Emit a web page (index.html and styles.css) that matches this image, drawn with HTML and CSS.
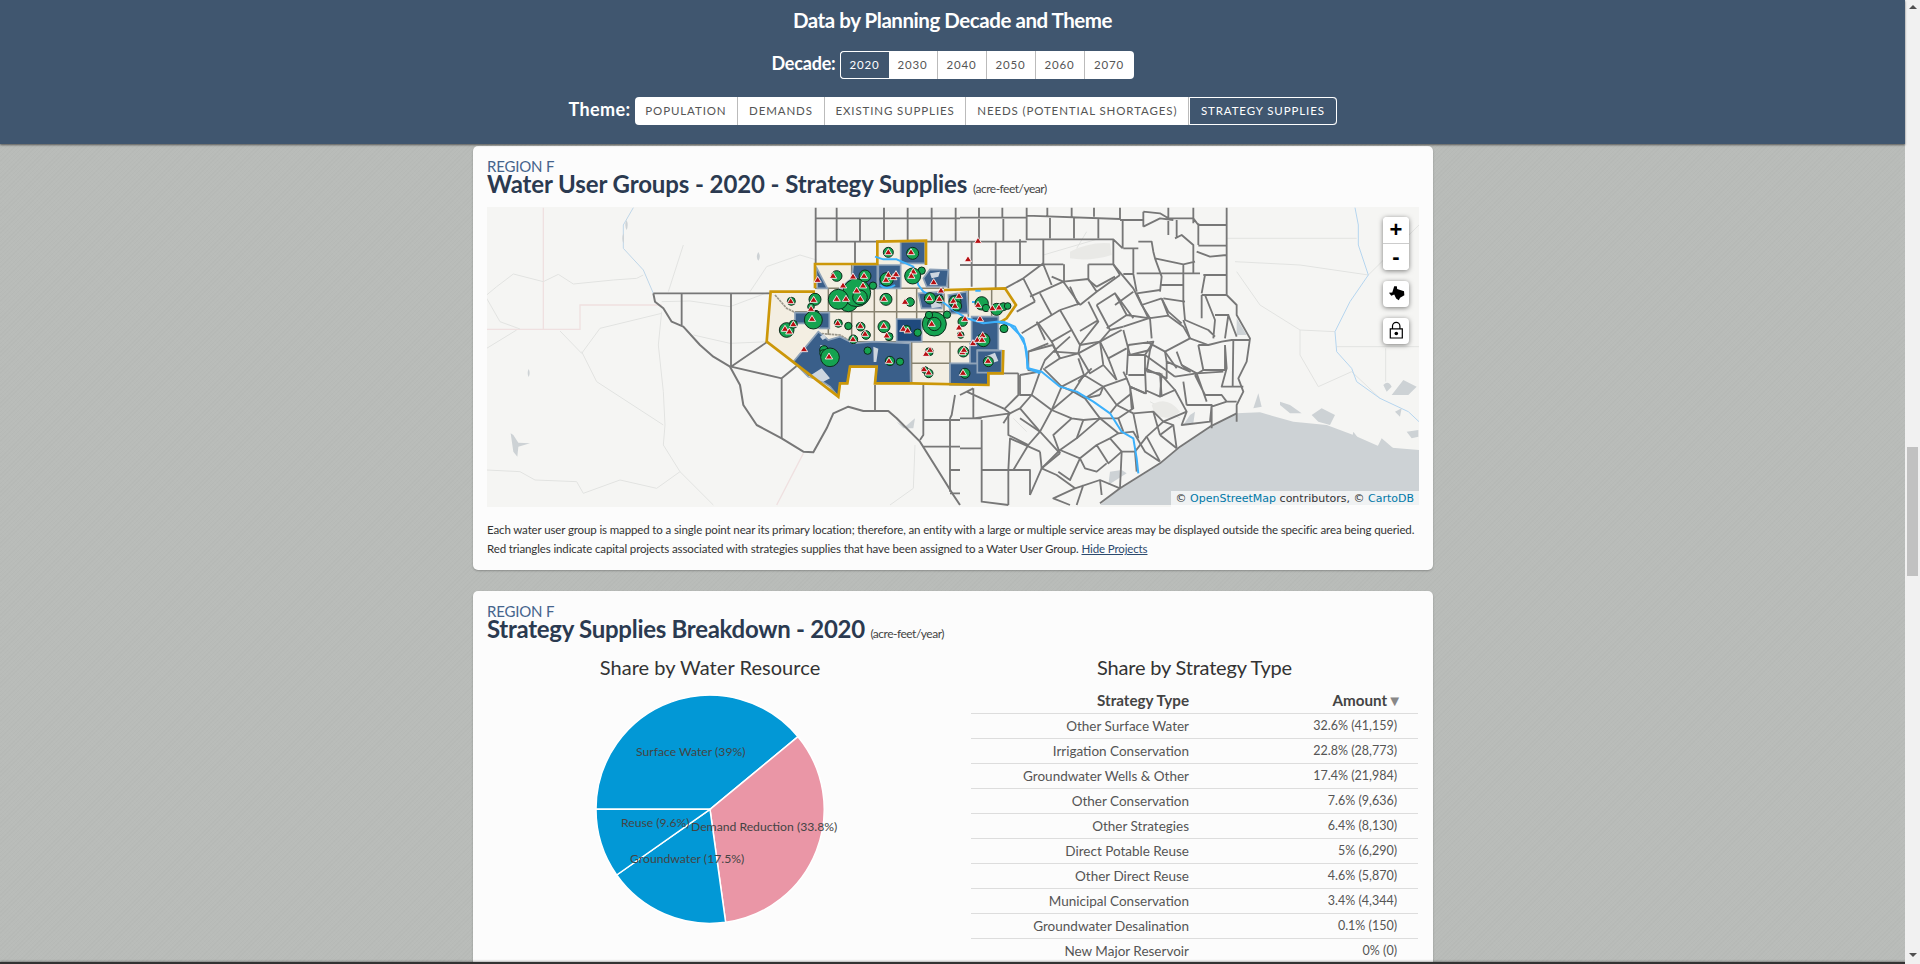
FILE: index.html
```html
<!DOCTYPE html>
<html lang="en">
<head>
<meta charset="utf-8">
<title>Data by Planning Decade and Theme</title>
<link rel="stylesheet" href="styles.css">
</head>
<body>
<div class="page">
  <header class="topbar">
    <h2 class="topbar-title">Data by Planning Decade and Theme</h2>
    <div class="picker">
      <span class="picker-label">Decade:</span>
      <div class="btn-group decade">
        <a class="btn active">2020</a><a class="btn">2030</a><a class="btn">2040</a><a class="btn">2050</a><a class="btn">2060</a><a class="btn">2070</a>
      </div>
    </div>
    <div class="picker theme">
      <span class="picker-label">Theme:</span>
      <div class="btn-group">
        <a class="btn">POPULATION</a><a class="btn">DEMANDS</a><a class="btn">EXISTING SUPPLIES</a><a class="btn">NEEDS (POTENTIAL SHORTAGES)</a><a class="btn active">STRATEGY SUPPLIES</a>
      </div>
    </div>
  </header>
  <main class="content">
    <section class="card map-card">
      <div class="eyebrow">REGION F</div>
      <h3 class="card-title">Water User Groups - 2020 - Strategy Supplies <small>(acre-feet/year)</small></h3>
      <div class="map">
        <svg class="map-svg" viewBox="487 207 932 300" width="932" height="300" aria-hidden="true">
          <defs>
            <g id="t"><polygon class="tri" points="0,-11 11,7 -11,7"/></g>
          </defs>
          <rect class="land" x="487" y="207" width="932" height="300"/>
          <g transform="translate(480 205) scale(.33333)">
            <path class="state" d="M20 373H300V300H545M190 8V373M970 745L890 900"/>
            <path class="road" d="M20 270L50 245L100 207L190 230L235 208L280 237L400 225L470 220L490 210M20 280L60 350L120 372M240 378L305 445L360 370L545 325M305 440L350 530L550 660M545 320L535 420L550 560L555 660L550 720L600 800L700 900M20 795L120 800L165 825L290 830L310 865L420 825L530 850L600 800M565 260L610 120M810 260L860 185L960 150L1010 165M545 290L630 288L750 305L870 260M640 390L750 415L870 410M20 430L110 375M1305 720L1300 850L1230 900"/>
            <path class="river-faint" d="M460 8L430 60L430 130L490 195L520 265"/>
            <path class="lake" d="M835 141q-9 15 0 26q9-12 0-26ZM146 492q-6 12 0 24q6-12 0-24ZM92 685L100 740L112 755L115 725L150 715L115 713L100 690ZM440 45q-8 15 0 30q6-15 0-30ZM430 85q-6 15 0 30q4-15 0-30ZM1250 650L1275 665L1305 640L1300 670L1270 670Z"/>
            <path class="county" d="M1007 8V175M1007 40H1440M1007 110H1440M1070 8V110M1140 40V110M1212 8V110M1283 8V110M1355 8V110M1427 8V110M1125 110V180M1405 110V250"/>
            <path class="county" d="M520 265H875M605 265V360M753 265V485M753 485L860 412M753 485L905 520L950 483M905 520V700"/>
            <path class="county thick" d="M520 265L525 290L550 310L575 350L610 365L660 420L700 455L750 485L780 540L790 600L830 660L905 700L970 740L1000 742L1040 670L1060 625L1105 605L1150 618L1225 618L1250 640L1320 710L1370 790L1420 870L1440 900"/>
            <path class="county" d="M1185 540V615M1330 540V690L1320 705M1330 645H1440M1330 725H1440M1410 640V860M1410 795H1440M1410 865H1440M1425 570L1415 630L1410 640"/>
          </g>
          <g transform="translate(960 205) scale(.33333)">
            <path class="water" d="M420 900L480 850L600 775L660 725L750 665L830 625L900 622L1000 650L1100 660L1180 690L1260 725L1377 735V900Z"/>
            <path class="road" d="M825 170L1020 180L1225 210M830 200L900 300L1020 375L1020 450L1075 545L1175 500M1130 425H1377M1020 375L1125 380M1225 210L1377 60M250 150L420 100M350 130L380 80M1175 500L1260 580M1277 430V530M160 640L200 680M570 590L660 640M800 100H1190"/>
            <path class="road fat" d="M330 140Q390 110 450 115L455 150Q390 170 330 160ZM575 600Q620 570 660 620Q630 650 585 630Z"/>
            <path class="river-faint thin" d="M1185 8L1195 60L1195 120L1225 210L1170 290L1125 380L1130 440L1175 490L1190 530L1260 580L1345 620L1377 650"/>
            <path class="lake" d="M895 565L905 605L880 610ZM960 590L990 600L1025 625L990 625L960 600ZM1055 630L1085 610L1125 630L1110 660L1075 650ZM1270 540Q1285 525 1295 545L1280 560ZM1295 570L1330 525L1370 545L1345 570ZM1305 620L1325 610L1320 635ZM1340 680L1375 675V695L1355 700ZM1180 680L1195 700L1175 705ZM1265 700L1300 730L1250 730ZM690 630L705 620L700 655L670 660ZM830 340L860 390L830 390ZM450 800L485 795L500 805L445 840Z"/>
            <path class="county" d="M0 38H200M57 8V38M127 8V38M200 8V105M262 8V32M335 8V35M402 8V35M480 8V45M200 32L480 42M270 32V100M342 35V100M415 40V100M488 45V130M0 110H200M130 42V110M57 42V110M200 103H460L488 130M35 110V245M107 110V250M180 103V182M250 103V178M0 180H250M250 178H310M312 178V235M385 178V222M460 178H385M460 103V178M460 178L480 210M490 130H535M520 130V205M480 45H550"/>
            <path class="county" d="M550 20L600 25L625 40L700 40L715 60H800M550 65L600 40L640 45M550 20V65M625 8V90M650 45V95M700 8V55M715 55V120M800 8V270M535 110H575L580 140L585 160L670 178L705 170M645 100L665 90L700 120V170M715 122H800M710 140L750 155L800 150M700 170V205M585 160L605 215L600 260M670 178V290M605 240H670M730 210H800M725 265L735 210M725 270H800L830 300V330L870 400L860 470L835 520L850 560L830 600L830 650M490 207H520L530 260M600 205H720"/>
            <path class="county" d="M135 250L190 220L225 290M190 220L250 175M250 178L275 240M275 215L310 230L360 300M310 230L385 222L410 260M460 178L520 250L545 300L570 340L575 400M480 210L410 260L360 300M520 260L465 300M600 255L530 265L545 300M300 315L235 355L275 410L335 375L300 315M235 355L185 385M360 295L300 315M335 375L360 420L415 350L385 290M415 345L360 378M410 300L450 375L490 365M450 375L420 410L445 460L500 430M490 375L510 450L570 435L580 410L505 420M565 340L625 332L670 365L690 400L615 440L560 410M690 400L745 420L785 410L815 405H870M670 290L675 345L745 375L765 395M605 280L625 320L665 355M735 270L765 345L760 400M765 330H805L795 400M805 330L830 395M715 420L730 495H795V420M795 420L800 490L785 545H850M820 405L818 545"/>
            <path class="county" d="M650 440L665 480L690 500L620 470V520L555 490L558 565L510 545L515 610M420 410L355 445L280 440L255 465L240 500L205 495V440L278 420M240 500L215 570L180 610L150 625L130 655M180 510V570L215 570M250 490L305 545L275 615L240 680M355 460L372 510L305 545M372 510L430 545L375 580L420 640M430 545L500 520L490 500M510 545L520 610L475 640L490 680M375 580L340 560L275 615L335 640L370 645L425 640M335 640L280 690L300 745M370 645L350 700L300 735L360 760L410 720L450 700M420 640L475 685L520 680L555 740L600 770M410 720L445 775L485 740H525L530 800M520 625L580 620L610 650L640 660L650 730M555 555L600 575L645 555L680 620L665 660L750 650L755 600H680M610 650L560 695L600 770M645 515L710 505L740 590M710 505L790 500M705 510L735 570H785L800 590L755 605V670M800 590L830 590"/>
            <path class="county" d="M300 745L245 790L290 810L345 850L420 825L480 850M360 760L330 825L295 800M360 760L375 790L410 800L440 775M485 740L480 850M420 825L425 870M345 850L280 880L330 900M370 840L350 900M65 645V890L145 900M0 640H65M65 730H0M65 795H210V870M145 795L150 700L240 740M145 625V690L205 720L240 680L180 640M40 550V640L150 625M0 570L40 550M20 560L130 610L150 625M85 540V505H175M175 505V570L135 610M420 895L480 850L600 775L660 725L750 665L830 625"/>
            <path class="county" d="M225 290L170 320M210 275L310 230M240 265L275 330M330 245L355 300M385 225L410 245L465 215M410 300L465 265L520 340M465 265L500 330L570 340M500 330L440 370M420 410L485 375M278 420L300 460L355 445M300 460L255 490M355 445L390 505L430 480L470 525M430 480L420 410M505 420L500 510M505 510H555V450L505 450M555 450L625 500L645 515M580 410L555 450M615 440L650 490M430 545L470 600L515 565M470 600L450 625M375 580L420 570M520 625L535 700M580 620L600 690M610 650L680 620M530 205H600M610 280L675 290M530 265L565 340M605 280L545 300M725 270V340M670 345L690 400M240 680L300 745M205 720L160 795M240 740L245 790M210 870L245 790M0 510H85M145 795V900M230 350L255 405M265 415L205 440M330 395L280 440M395 490L355 530M670 530L680 600M600 505L605 575M560 500L600 505"/>
            <path class="county" d="M215 570L275 615M180 610L240 680M305 545L340 560M240 500L180 510M372 510L340 560M420 570L430 545M500 520L510 545M470 600L520 625M475 640L420 640M275 410L300 460M360 420L420 410M360 420L355 445M490 365L565 340M445 460L470 525M570 435L560 500M615 440L620 470M745 420L715 420M730 495L705 510M665 480L710 505M555 565L510 545M600 575L605 505M680 600H755M645 555L600 505M300 735L245 790M350 700L420 640M450 700L475 685M450 700L485 740M560 695L525 740M600 690L650 730M640 660L600 690M625 332L605 280"/>
          </g>
          <g transform="translate(740 220) scale(.33333)">
            <path class="cream" d="M92 215H225V132H412V65L558 62V135L612 210L795 205L828 255L800 295L775 310V390H790L788 460H745V495L515 490H405L410 440H330L322 490H300L295 530L80 365Z"/>
            <path class="cell" d="M265 205V345M335 275V365M403 205V365M470 205V297M530 205V300M612 210V290M685 210V290M755 210V290M225 205H612M165 275H612M265 365H470M515 365H775M515 430H630M515 365V490M630 365V490M335 132V205"/>
            <path class="pecos" d="M105 225L140 265L170 280M235 340L300 345L350 375L400 380L410 430L415 440"/>
            <path class="blue" d="M228 140L262 205H232Z"/>
            <path class="blue" d="M340 135H412V205H300L335 175Z"/>
            <path class="blue" d="M415 135H482V205H415Z"/>
            <path class="blue" d="M482 65H555V130H482Z"/>
            <path class="blue" d="M165 278H268V325H240L200 310H165Z"/>
            <path class="blue dark" d="M470 297H545V365H470Z"/>
            <path class="blue" d="M160 425L235 335L265 360L300 350L340 370L400 365L510 370L512 490H405L410 440H330L322 490H300L295 530L270 500L240 480L205 470Z"/>
            <path class="blue" d="M630 430H745V495H630Z"/>
            <path class="blue" d="M695 290H775V390H712V430H690V370H695Z"/>
            <path class="blue" d="M712 392H785V458H712Z"/>
            <path class="blue" d="M550 175L570 148L625 150L620 200H560ZM535 220L610 215L605 265H545Z"/>
            <path class="blue" d="M625 225L680 215L685 280H630Z"/>
            <path class="patch" d="M240 350l12-8l6 12l-10 6ZM240 375l14 2l-8 10ZM205 470l40-25l25 30l-20 10ZM735 410l30-12l10 25l-25 8ZM570 240l25-10l10 30l-30 5ZM570 160l30-5l-5 15l-20 5ZM400 380l15 6l-6 40l-8 0Z"/>
            <path class="gold" d="M225 205V132H412V65L558 62V135M612 210L795 205L828 255L800 295L775 310M790 390L788 460H745V495L515 490H405L410 440H330L322 490H300L295 530L80 365L92 215H225"/>
            <path class="river" d="M405 110L430 118L470 118L520 140L535 195L550 215L600 240L640 270L680 295L730 310L770 305L810 315L850 355L860 395L862 445L900 460M420 195Q440 212 465 195"/>
            <path class="river" d="M696 246L705 246M706 212H722"/>
            <g class="dots">
              <circle cx="325" cy="245" r="30"/><circle cx="350" cy="218" r="42"/><circle cx="295" cy="238" r="30"/><circle cx="360" cy="232" r="22"/><circle cx="445" cy="97" r="15"/><circle cx="518" cy="100" r="18"/><circle cx="545" cy="152" r="11"/><circle cx="290" cy="168" r="16"/><circle cx="375" cy="168" r="18"/><circle cx="399" cy="197" r="11"/><circle cx="225" cy="238" r="18"/><circle cx="438" cy="238" r="18"/><circle cx="510" cy="246" r="13"/><circle cx="518" cy="168" r="24"/><circle cx="154" cy="244" r="12"/><circle cx="213" cy="260" r="10"/><circle cx="228" cy="280" r="9"/><circle cx="220" cy="300" r="27"/><circle cx="325" cy="318" r="11"/><circle cx="295" cy="310" r="12"/><circle cx="362" cy="320" r="13"/><circle cx="378" cy="345" r="13"/><circle cx="432" cy="320" r="18"/><circle cx="447" cy="350" r="12"/><circle cx="340" cy="358" r="13"/><circle cx="140" cy="330" r="22"/><circle cx="160" cy="313" r="12"/><circle cx="500" cy="328" r="12"/><circle cx="533" cy="338" r="11"/><circle cx="583" cy="312" r="36"/><circle cx="567" cy="285" r="11"/><circle cx="621" cy="284" r="11"/><circle cx="570" cy="235" r="17"/><circle cx="598" cy="237" r="12"/><circle cx="645" cy="245" r="18"/><circle cx="650" cy="258" r="15"/><circle cx="725" cy="250" r="20"/><circle cx="738" cy="264" r="11"/><circle cx="770" cy="268" r="18"/><circle cx="790" cy="260" r="12"/><circle cx="803" cy="258" r="10"/><circle cx="792" cy="326" r="12"/><circle cx="668" cy="305" r="14"/><circle cx="662" cy="345" r="10"/><circle cx="730" cy="360" r="20"/><circle cx="383" cy="392" r="11"/><circle cx="252" cy="390" r="13"/><circle cx="250" cy="400" r="11"/><circle cx="270" cy="412" r="28"/><circle cx="450" cy="423" r="14"/><circle cx="480" cy="425" r="11"/><circle cx="568" cy="395" r="12"/><circle cx="566" cy="460" r="13"/><circle cx="555" cy="450" r="10"/><circle cx="675" cy="460" r="15"/><circle cx="670" cy="395" r="16"/><circle cx="745" cy="425" r="15"/><circle cx="440" cy="178" r="20"/><circle cx="583" cy="312" r="20"/>
            </g>
            <g>
              <use href="#t" x="445" y="97"/><use href="#t" x="513" y="97"/><use href="#t" x="714" y="63"/><use href="#t" x="684" y="118"/><use href="#t" x="233" y="180"/><use href="#t" x="279" y="168"/><use href="#t" x="339" y="170"/><use href="#t" x="372" y="168"/><use href="#t" x="309" y="197"/><use href="#t" x="369" y="197"/><use href="#t" x="350" y="212"/><use href="#t" x="445" y="165"/><use href="#t" x="460" y="172"/><use href="#t" x="468" y="163"/><use href="#t" x="438" y="180"/><use href="#t" x="520" y="155"/><use href="#t" x="514" y="168"/><use href="#t" x="581" y="187"/><use href="#t" x="603" y="212"/><use href="#t" x="568" y="235"/><use href="#t" x="598" y="237"/><use href="#t" x="152" y="244"/><use href="#t" x="221" y="240"/><use href="#t" x="213" y="267"/><use href="#t" x="216" y="297"/><use href="#t" x="290" y="237"/><use href="#t" x="318" y="237"/><use href="#t" x="361" y="237"/><use href="#t" x="432" y="237"/><use href="#t" x="495" y="246"/><use href="#t" x="640" y="243"/><use href="#t" x="657" y="228"/><use href="#t" x="645" y="258"/><use href="#t" x="714" y="255"/><use href="#t" x="757" y="265"/><use href="#t" x="777" y="263"/><use href="#t" x="293" y="310"/><use href="#t" x="160" y="313"/><use href="#t" x="135" y="327"/><use href="#t" x="148" y="335"/><use href="#t" x="361" y="318"/><use href="#t" x="375" y="342"/><use href="#t" x="431" y="318"/><use href="#t" x="440" y="347"/><use href="#t" x="339" y="358"/><use href="#t" x="490" y="327"/><use href="#t" x="503" y="332"/><use href="#t" x="575" y="312"/><use href="#t" x="657" y="323"/><use href="#t" x="660" y="343"/><use href="#t" x="675" y="297"/><use href="#t" x="720" y="297"/><use href="#t" x="699" y="370"/><use href="#t" x="712" y="360"/><use href="#t" x="728" y="346"/><use href="#t" x="726" y="360"/><use href="#t" x="192" y="388"/><use href="#t" x="267" y="410"/><use href="#t" x="447" y="423"/><use href="#t" x="558" y="402"/><use href="#t" x="570" y="390"/><use href="#t" x="667" y="397"/><use href="#t" x="672" y="390"/><use href="#t" x="552" y="448"/><use href="#t" x="566" y="458"/><use href="#t" x="669" y="459"/><use href="#t" x="744" y="423"/>
            </g>
          </g>
          <g transform="translate(960 205) scale(.33333)">
            <path class="river" d="M110 350L130 350L165 365L195 420L205 490L245 500L300 545L350 560L400 590L450 625L485 680L520 700L530 760L535 805"/>
          </g>
        </svg>
        <div class="map-controls">
          <div class="ctl-stack">
            <a class="ctl">+</a>
            <a class="ctl">-</a>
          </div>
          <a class="ctl single">
            <svg class="ctl-icon" viewBox="1283 240 52 50" width="17" height="17" aria-hidden="true"><path class="ink" d="M1286 263L1296 262L1302 243L1310 243L1311 251L1332 258L1333 270L1320 278L1316 286L1308 280L1302 268L1293 272Z"/></svg>
          </a>
          <a class="ctl single">
            <svg class="ctl-icon" viewBox="0 0 26 26" width="26" height="26" aria-hidden="true"><path class="lock-line" d="M9.5 10.5V8a3.7 3.7 0 0 1 7.4 0v2.500M7.300 10.800H19.300V20H7.300Z"/><circle class="ink" cx="13.300" cy="15.500" r="1.800"/></svg>
          </a>
        </div>
        <div class="attribution">© <a>OpenStreetMap</a> contributors, © <a>CartoDB</a></div>
      </div>
      <p class="note">Each water user group is mapped to a single point near its primary location; therefore, an entity with a large or multiple service areas may be displayed outside the specific area being queried. Red triangles indicate capital projects associated with strategies supplies that have been assigned to a Water User Group. <a class="note-link">Hide Projects</a></p>
    </section>
    <section class="card breakdown">
      <div class="eyebrow">REGION F</div>
      <h3 class="card-title">Strategy Supplies Breakdown - 2020 <small>(acre-feet/year)</small></h3>
      <div class="columns">
        <div class="col-chart">
          <h4 class="col-title chart-title">Share by Water Resource</h4>
          <svg class="pie" viewBox="0 0 446 300" width="446" height="300" aria-hidden="false">
            <g transform="translate(93 0) scale(.33333)">
              <path class="slice-blue" d="M390 388L48 388A342 342 0 0 1 654 170Z"/>
              <path class="slice-pink" d="M390 388L654 170A342 342 0 0 1 437 727Z"/>
              <path class="slice-blue" d="M390 388L437 727A342 342 0 0 1 110 585Z"/>
              <path class="slice-blue" d="M390 388L110 585A342 342 0 0 1 48 388Z"/>
            </g>
            <text class="pie-label" x="149" y="76">Surface Water (39%)</text>
            <text class="pie-label" x="134" y="147">Reuse (9.6%)</text>
            <text class="pie-label" x="204" y="151">Demand Reduction (33.8%)</text>
            <text class="pie-label" x="143" y="183">Groundwater (17.5%)</text>
          </svg>
        </div>
        <div class="col-table">
          <h4 class="col-title">Share by Strategy Type</h4>
          <table class="data">
            <thead><tr><th>Strategy Type</th><th>Amount<span class="sort">▼</span></th></tr></thead>
            <tbody>
              <tr><td>Other Surface Water</td><td>32.6% (41,159)</td></tr>
              <tr><td>Irrigation Conservation</td><td>22.8% (28,773)</td></tr>
              <tr><td>Groundwater Wells &amp; Other</td><td>17.4% (21,984)</td></tr>
              <tr><td>Other Conservation</td><td>7.6% (9,636)</td></tr>
              <tr><td>Other Strategies</td><td>6.4% (8,130)</td></tr>
              <tr><td>Direct Potable Reuse</td><td>5% (6,290)</td></tr>
              <tr><td>Other Direct Reuse</td><td>4.6% (5,870)</td></tr>
              <tr><td>Municipal Conservation</td><td>3.4% (4,344)</td></tr>
              <tr><td>Groundwater Desalination</td><td>0.1% (150)</td></tr>
              <tr><td>New Major Reservoir</td><td>0% (0)</td></tr>
            </tbody>
          </table>
        </div>
      </div>
    </section>
  </main>
  <div class="bottom-edge"></div>
</div>
<aside class="scrollbar">
  <span class="arrow up"></span>
  <span class="thumb"></span>
  <span class="arrow down"></span>
</aside>
</body>
</html>
```
FILE: styles.css
```css
* { box-sizing: border-box; }
html, body { margin: 0; height: 964px; overflow: hidden; }
body { display: flex; font-family: Lato, "Liberation Sans", sans-serif; color: #444; }

.page {
  flex: 1;
  min-width: 0;
  height: 964px;
  display: flex;
  flex-direction: column;
  background-color: #b9bcb9;
  background-image:
    repeating-linear-gradient(45deg, rgba(255,255,255,.02) 0 1px, transparent 1px 3px),
    repeating-linear-gradient(-45deg, rgba(0,0,0,.015) 0 1px, transparent 1px 3px);
}

.topbar {
  height: 144px;
  flex: none;
  background: #40566f;
  color: #fff;
  text-align: center;
  box-shadow: 0 1px 2px rgba(0,0,0,.55);
  position: relative;
  z-index: 2;
}
.topbar-title {
  margin: 0 0 11px;
  height: 40px;
  font-size: 20.500px;
  line-height: 40px;
  font-weight: 700;
  letter-spacing: -.45px;
}
.picker { display: flex; justify-content: center; align-items: flex-start; gap: 4px; height: 28px; }
.picker.theme { margin-top: 18px; }
.picker-label { font-size: 18px; font-weight: 700; line-height: 24px; letter-spacing: -.2px; }
.theme .picker-label { letter-spacing: .4px; }
.btn-group { display: flex; background: #fff; border-radius: 4px; height: 28px; overflow: hidden; }
.btn {
  display: block;
  height: 28px;
  padding: 0 10.800px;
  line-height: 28px;
  font-size: 11.500px;
  letter-spacing: .88px;
  color: #555;
  border-right: 1px solid #bbb;
}
.btn:last-child { border-right: 0; }
.decade .btn { width: 49px; padding: 0; text-align: center; }
.btn.active {
  background: #40566f;
  color: #fff;
  border: 1px solid #fff;
  line-height: 26px;
}
.btn-group .btn.active:first-child { border-radius: 4px 0 0 4px; border-right: 0; }
.btn-group .btn.active:last-child { border-radius: 0 4px 4px 0; }

.content {
  flex: 1;
  min-height: 0;
  overflow: hidden;
  padding-top: 2px;
}
.bottom-edge {
  flex: none;
  height: 2px;
  background: #333;
  box-shadow: 0 -1px 2px rgba(0,0,0,.3);
}

.card {
  width: 960px;
  margin: 0 auto 21px 473px;
  padding: 11px 14px 0;
  background: #fcfcfc;
  border-radius: 5px;
  box-shadow: 0 1px 2px rgba(0,0,0,.25);
}
.map-card { height: 424px; }
.eyebrow { font-size: 15px; line-height: 18px; color: #45648c; letter-spacing: -.2px; }
.card-title {
  margin: 0;
  font-size: 24px;
  line-height: 18px;
  font-weight: 700;
  color: #2b3a50;
  letter-spacing: -.1px;
  white-space: nowrap;
}
.breakdown .card-title { letter-spacing: -.28px; }
.card-title small { font-size: 12px; line-height: 0; font-weight: 400; letter-spacing: -.5px; color: #444; }

.map {
  position: relative;
  width: 932px;
  height: 300px;
  margin-top: 14px;
  overflow: hidden;
}
.map-svg { display: block; }
.land { fill: #f5f5f3; }
.water, .lake { fill: #cdd2d5; stroke: none; }
.state { fill: none; stroke: #efe0e0; stroke-width: 4; }
.road { fill: none; stroke: #e2e3e1; stroke-width: 3; }
.road.fat { fill: #e9e9e6; stroke: none; }
.river-faint { fill: none; stroke: #bfd6e8; stroke-width: 3; }
.river-faint.thin { stroke: #b5d5ef; }
.county { fill: none; stroke: #777; stroke-width: 5.500; stroke-linejoin: round; }
.county.thick { stroke-width: 6; }
.cream { fill: #f3eee2; }
.cell { fill: none; stroke: #87826f; stroke-width: 4.500; }
.pecos { fill: none; stroke: #9a968a; stroke-width: 5; stroke-dasharray: 8 2; }
.blue { fill: #3a5f8a; stroke: #8ea2b8; stroke-width: 5; }
.blue.dark { fill: #1f4a7e; }
.patch { fill: #cdd6df; }
.gold { fill: none; stroke: #cc9708; stroke-width: 8; stroke-linejoin: miter; }
.river { fill: none; stroke: #3bb0fb; stroke-width: 6; stroke-linejoin: round; }
.dots circle { fill: #15a350; stroke: #0d2a1b; stroke-width: 3; }
.tri { fill: #b70f12; stroke: #fff; stroke-width: 2.500; stroke-linejoin: miter; }

.map-controls {
  position: absolute;
  top: 10px;
  right: 10px;
  width: 26px;
  display: flex;
  flex-direction: column;
  gap: 10.500px;
}
.ctl-stack { display: flex; flex-direction: column; border-radius: 4px; box-shadow: 0 1px 5px rgba(0,0,0,.5); background: #fff; }
.ctl {
  display: flex;
  align-items: center;
  justify-content: center;
  width: 26px;
  height: 26.500px;
  background: #fff;
  color: #000;
  font: 700 22px/1 "Liberation Sans", sans-serif;
  border-radius: 4px;
}
.ctl-stack .ctl:first-child { border-bottom: 1px solid #ccc; border-radius: 4px 4px 0 0; }
.ctl-stack .ctl:last-child { border-radius: 0 0 4px 4px; }
.ctl.single { box-shadow: 0 1px 5px rgba(0,0,0,.5); }
.ctl-icon { display: block; }
.ink { fill: #000; }
.lock-line { fill: none; stroke: #000; stroke-width: 1.200; }

.attribution {
  position: absolute;
  right: 0;
  bottom: 0;
  height: 16px;
  padding: 0 5px;
  background: rgba(255,255,255,.7);
  font: 11px/16px "DejaVu Sans", sans-serif;
  color: #333;
  white-space: nowrap;
}
.attribution a { color: #0078a8; }

.note { margin: 13px 0 0; font-size: 11.500px; line-height: 19px; color: #333; letter-spacing: -.125px; }
.note-link { color: #2c4a6e; text-decoration: underline; }

.columns { display: flex; gap: 38px; margin-top: 15px; }
.col-chart { width: 446px; flex: none; }
.col-table { width: 447px; flex: none; }
.col-title {
  margin: 0;
  font-size: 20px;
  line-height: 28px;
  font-weight: 400;
  color: #333;
  text-align: center;
  letter-spacing: -.2px;
}
.chart-title { letter-spacing: .05px; }
.pie { display: block; margin-top: -1px; }
.slice-blue { fill: #0298d6; stroke: #fff; stroke-width: 4.500; }
.slice-pink { fill: #ea96a6; stroke: #fff; stroke-width: 4.500; }
.pie-label { font-size: 12.200px; fill: #444; }

.data {
  width: 447px;
  margin-top: 7px;
  border-collapse: collapse;
  table-layout: fixed;
  font-size: 13.500px;
  color: #555;
}
.data th, .data td {
  height: 25px;
  padding: 0;
  text-align: right;
  border-bottom: 1px solid #ddd;
  font-weight: 400;
}
.data th { font-weight: 700; color: #444; font-size: 15.200px; }
.data td:last-child { font-size: 12.500px; padding-right: 21px; }
.data th:first-child, .data td:first-child { width: 218px; }
.data th:last-child { padding-right: 16px; }
.sort { color: #888; font-size: 15px; line-height: 0; }

.scrollbar {
  flex: none;
  position: relative;
  width: 15px;
  height: 964px;
  background: #f1f1f1;
}
.thumb {
  position: absolute;
  top: 447px;
  left: 2px;
  width: 11px;
  height: 129px;
  background: #c1c1c1;
}
.arrow { position: absolute; left: 3.500px; width: 0; height: 0; border-left: 4px solid transparent; border-right: 4px solid transparent; }
.arrow.up { top: 5px; border-bottom: 4px solid #505050; }
.arrow.down { bottom: 7px; border-top: 4px solid #505050; }
```
